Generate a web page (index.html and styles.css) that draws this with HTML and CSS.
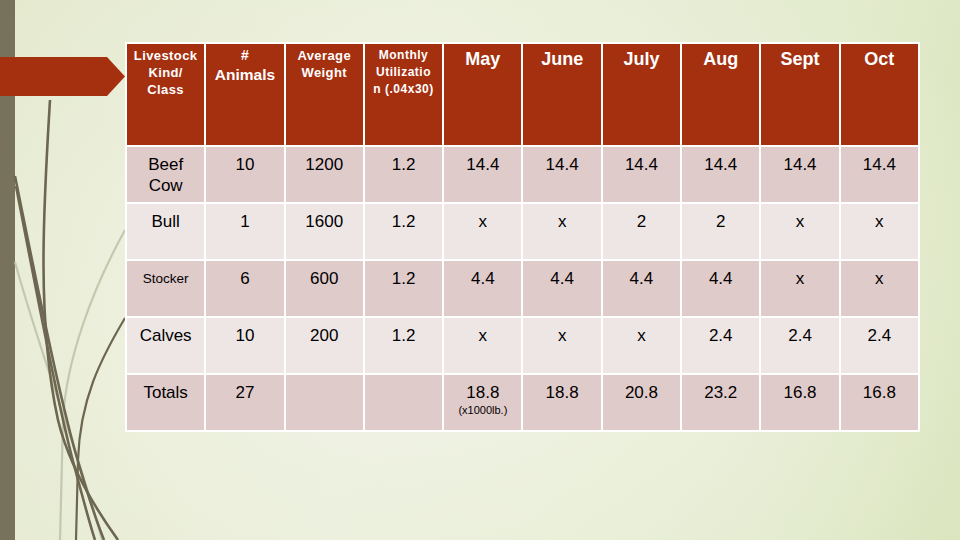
FILE: index.html
```html
<!DOCTYPE html>
<html>
<head>
<meta charset="utf-8">
<link rel="stylesheet" href="styles.css">
</head>
<body>
<div class="slide">
  <div class="bar"></div>
  <svg class="wisps" width="960" height="540" viewBox="0 0 960 540">
    <path class="lite" d="M125,230 C92,290 66,360 63,420 L60,540"/>
    <path class="lite" d="M15,262 C42,360 78,450 102,540"/>
    <path class="dark" d="M50,100 C44,200 36,320 58,420 C70,470 100,515 118,540"/>
    <path class="dark" d="M15,176 C40,300 62,410 80,468 C88,495 98,525 104,540"/>
    <path class="dark" d="M16,186 C38,300 58,405 74,465 C82,495 90,525 95,540"/>
    <path class="dark thin" d="M125,318 C100,360 80,400 78,460 L76,540"/>
  </svg>
  <div class="arrow"></div>
  <main class="content">
    <table class="grid">
      <thead>
        <tr>
          <th class="sm">Livestock<br>Kind/<br>Class</th>
          <th class="md"><span class="hash">#</span><br>Animals</th>
          <th class="sm">Average<br>Weight</th>
          <th class="xs">Monthly<br>Utilizatio<br>n (.04x30)</th>
          <th>May</th>
          <th>June</th>
          <th>July</th>
          <th>Aug</th>
          <th>Sept</th>
          <th>Oct</th>
        </tr>
      </thead>
      <tbody>
        <tr class="odd">
          <td>Beef<br>Cow</td><td>10</td><td>1200</td><td>1.2</td><td>14.4</td><td>14.4</td><td>14.4</td><td>14.4</td><td>14.4</td><td>14.4</td>
        </tr>
        <tr class="even">
          <td>Bull</td><td>1</td><td>1600</td><td>1.2</td><td>x</td><td>x</td><td>2</td><td>2</td><td>x</td><td>x</td>
        </tr>
        <tr class="odd">
          <td class="small">Stocker</td><td>6</td><td>600</td><td>1.2</td><td>4.4</td><td>4.4</td><td>4.4</td><td>4.4</td><td>x</td><td>x</td>
        </tr>
        <tr class="even">
          <td>Calves</td><td>10</td><td>200</td><td>1.2</td><td>x</td><td>x</td><td>x</td><td>2.4</td><td>2.4</td><td>2.4</td>
        </tr>
        <tr class="odd">
          <td>Totals</td><td>27</td><td></td><td></td><td>18.8<br><span class="unit">(x1000lb.)</span></td><td>18.8</td><td>20.8</td><td>23.2</td><td>16.8</td><td>16.8</td>
        </tr>
      </tbody>
    </table>
  </main>
</div>
</body>
</html>
```

FILE: styles.css
```css
html, body {
  margin: 0;
  padding: 0;
}
body {
  font-family: "Liberation Sans", Arial, sans-serif;
}
.slide {
  position: relative;
  width: 960px;
  height: 540px;
  overflow: hidden;
  display: flex;
  background:
    radial-gradient(ellipse 620px 420px at 420px 300px, rgba(246,247,238,0.95) 0%, rgba(240,243,228,0.6) 45%, rgba(240,243,228,0) 100%),
    linear-gradient(100deg, #e4e9cd 0%, #e9eed9 40%, #e3ebcd 80%, #dbe5bf 100%);
}
.bar {
  width: 15px;
  flex: none;
  background: #78715b;
}
.wisps {
  position: absolute;
  left: 0;
  top: 0;
  fill: none;
}
.wisps .dark {
  stroke: #6d6650;
  stroke-width: 2.6;
}
.wisps .thin {
  stroke-width: 2.2;
}
.wisps .lite {
  stroke: #c4c8ae;
  stroke-width: 2.2;
}
.arrow {
  position: absolute;
  left: 0;
  top: 57px;
  width: 125px;
  height: 39px;
  background: #a53010;
  clip-path: polygon(0 0, 107px 0, 125px 19.5px, 107px 39px, 0 39px);
}
.content {
  position: relative;
  padding: 42px 0 0 110px;
}
.grid {
  border-collapse: separate;
  border-spacing: 2px;
  background: #ffffff;
  width: 795px;
  table-layout: fixed;
}
.grid th, .grid td {
  text-align: center;
  vertical-align: top;
}
.grid th {
  background: #a53010;
  color: #ffffff;
  font-weight: bold;
  font-size: 18px;
  line-height: 22px;
  height: 97px;
  padding: 4px 0 0 0;
}
.grid th.sm {
  font-size: 13px;
  line-height: 17px;
  letter-spacing: 0.4px;
  padding-top: 3px;
  height: 98px;
}
.grid th.xs {
  font-size: 12px;
  line-height: 17px;
  letter-spacing: 0.5px;
  padding-top: 3px;
  height: 98px;
}
.grid th.md {
  font-size: 15.5px;
  line-height: 20px;
  padding-top: 1px;
  height: 100px;
}
.grid th.md .hash {
  font-size: 14px;
}
.grid td {
  font-size: 17px;
  line-height: 21px;
  color: #000000;
  height: 48px;
  padding: 7px 0 0 0;
}
.grid td.small {
  font-size: 13.5px;
}
.grid tr.odd td {
  background: #e0cbcb;
}
.grid tr.even td {
  background: #eee6e5;
}
.unit {
  display: inline-block;
  font-size: 11px;
  line-height: 12px;
  vertical-align: top;
  margin-top: 1px;
}
```
